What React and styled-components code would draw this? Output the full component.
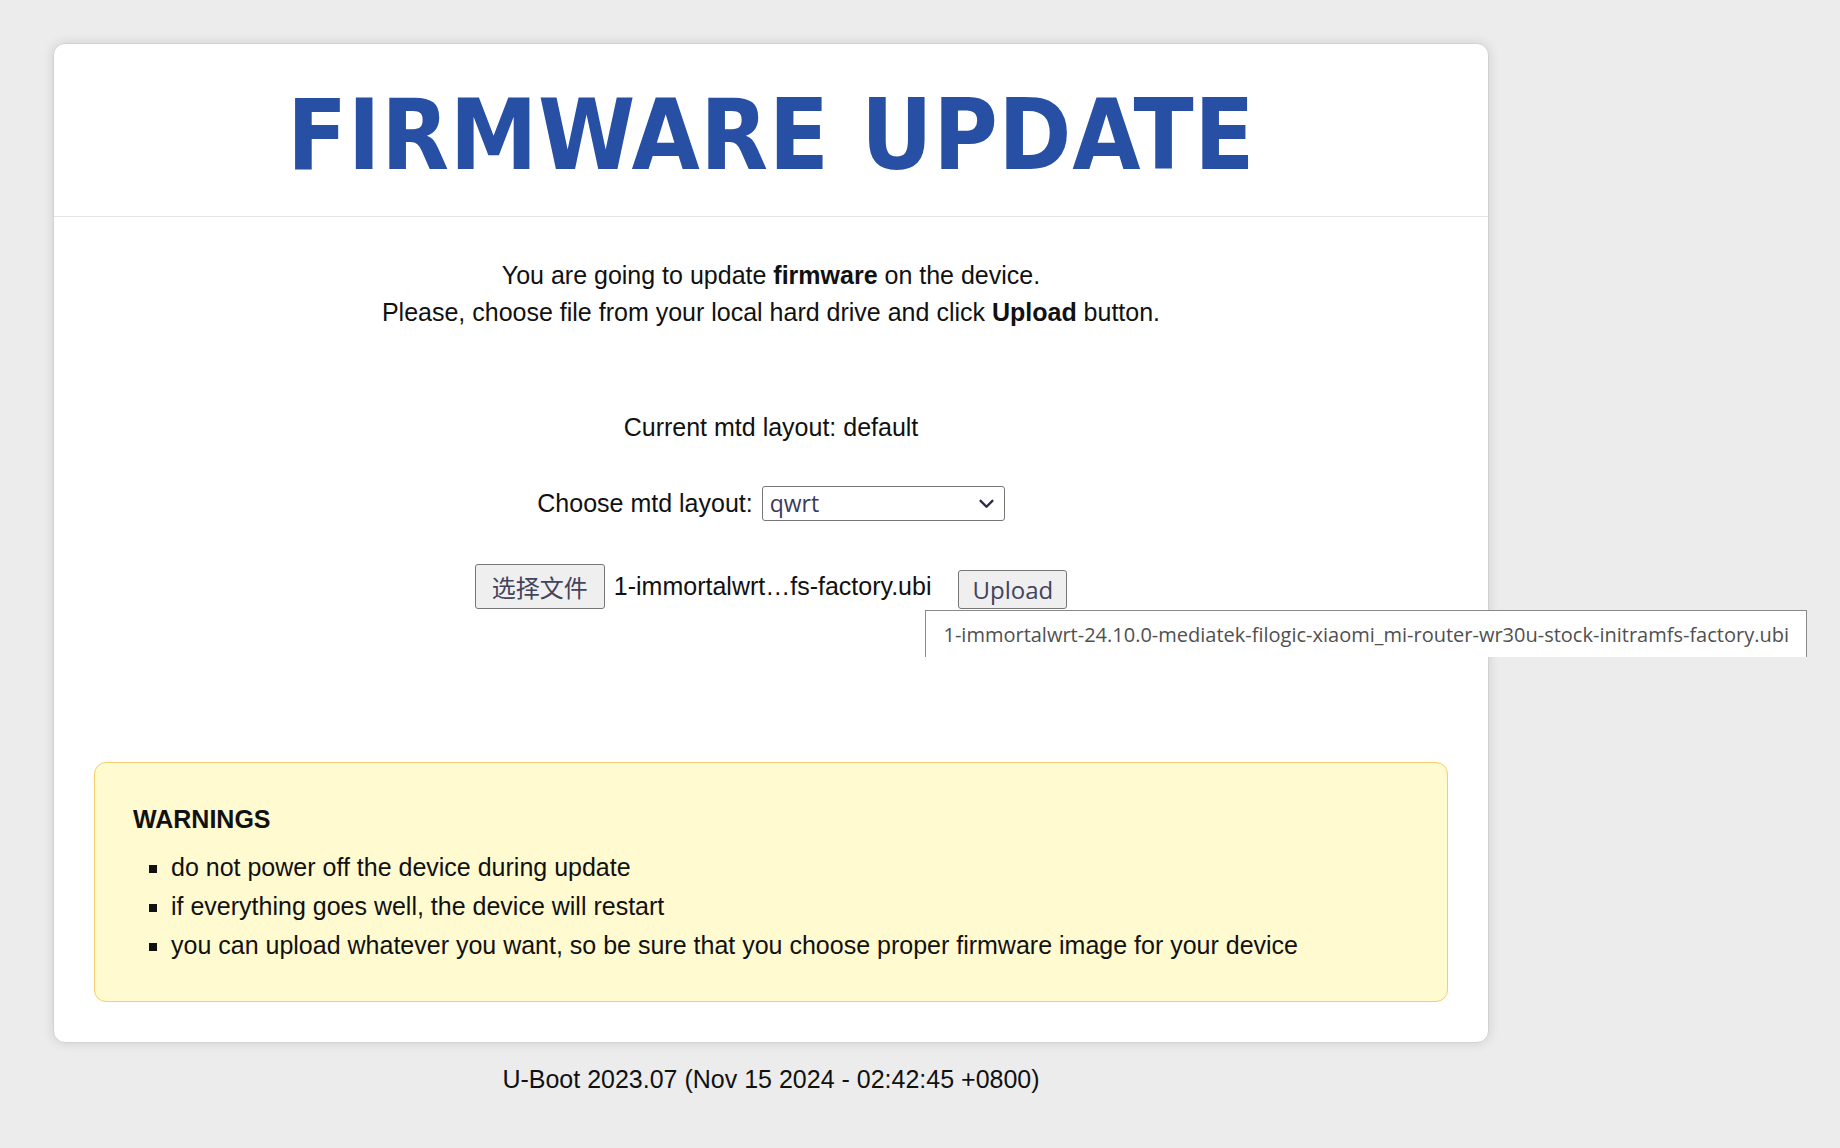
import React from "react";
import styled, { createGlobalStyle } from "styled-components";

const GlobalStyle = createGlobalStyle`
    html, body {
        margin: 0;
        padding: 0;
        background-color: #ececec;
        font-family: "Liberation Sans", Arial, sans-serif;
        color: #111;
    }
`;

const App = () => {
    return (
        <>
            <GlobalStyle />
            <Page>
                <Card>
                    <Header>
                        <Title>FIRMWARE UPDATE</Title>
                    </Header>
                    <Body>
                        <Intro>
                            <Line>You are going to update <b>firmware</b> on the device.</Line>
                            <Line>Please, choose file from your local hard drive and click <b>Upload</b> button.</Line>
                        </Intro>
                        <Current>Current mtd layout: default</Current>
                        <ChooseRow>
                            <span>Choose mtd layout:</span>
                            <SelectBox>
                                <Select defaultValue="qwrt">
                                    <option value="qwrt">qwrt</option>
                                    <option value="default">default</option>
                                </Select>
                                <Chevron viewBox="0 0 16 16">
                                    <path d="M3.5 6 L8 10.5 L12.5 6" fill="none" stroke="#2b2b4a" strokeWidth="1.8" strokeLinecap="round" strokeLinejoin="round" />
                                </Chevron>
                            </SelectBox>
                        </ChooseRow>
                        <FileRow>
                            <FormButton $cjk>选择文件</FormButton>
                            <FileName>1-immortalwrt…fs-factory.ubi</FileName>
                            <UploadWrap>
                                <FormButton>Upload</FormButton>
                                <Tooltip>1-immortalwrt-24.10.0-mediatek-filogic-xiaomi_mi-router-wr30u-stock-initramfs-factory.ubi</Tooltip>
                            </UploadWrap>
                        </FileRow>
                        <Warning>
                            <WarningTitle>WARNINGS</WarningTitle>
                            <List>
                                <li>do not power off the device during update</li>
                                <li>if everything goes well, the device will restart</li>
                                <li>you can upload whatever you want, so be sure that you choose proper firmware image for your device</li>
                            </List>
                        </Warning>
                    </Body>
                </Card>
                <Footer>U-Boot 2023.07 (Nov 15 2024 - 02:42:45 +0800)</Footer>
            </Page>
        </>
    );
};

const Page = styled.div`
    display: flex;
    flex-direction: column;
    width: 1436px;
    padding: 43px 0 0 53px;
`;

const Card = styled.div`
    background-color: white;
    border: 1px solid #d2d2d2;
    border-radius: 12px;
    box-shadow: 0 0 12px rgba(0, 0, 0, 0.12);
    padding-bottom: 40px;
`;

const Header = styled.div`
    display: flex;
    align-items: center;
    justify-content: center;
    box-sizing: border-box;
    height: 173px;
    padding-top: 10px;
    border-bottom: 1px solid #e4e4e4;
`;

const Title = styled.h1`
    margin: 0;
    font-family: "DejaVu Sans Condensed", "DejaVu Sans", sans-serif;
    font-stretch: condensed;
    font-weight: bold;
    font-size: 98px;
    letter-spacing: 0.6px;
    line-height: 1;
    color: #2750a5;
`;

const Body = styled.div`
    display: flex;
    flex-direction: column;
    align-items: center;
    font-size: 25px;
`;

const Intro = styled.div`
    display: flex;
    flex-direction: column;
    align-items: center;
    padding-top: 40px;
`;

const Line = styled.div`
    line-height: 37px;

    b {
        font-weight: bold;
    }
`;

const Current = styled.div`
    margin-top: 78px;
    line-height: 37px;
`;

const ChooseRow = styled.div`
    display: flex;
    align-items: center;
    gap: 9px;
    margin-top: 40px;
    height: 34px;
`;

const SelectBox = styled.div`
    position: relative;
    display: flex;
`;

const Select = styled.select`
    appearance: none;
    width: 243px;
    height: 35px;
    padding: 0 30px 0 7px;
    border: 1px solid #767676;
    border-radius: 3px;
    background-color: white;
    font-family: "Open Sans", "Noto Sans", sans-serif;
    font-size: 23px;
    color: #3a3a5e;
    outline: none;
`;

const Chevron = styled.svg`
    position: absolute;
    right: 8px;
    top: 7px;
    width: 21px;
    height: 21px;
    pointer-events: none;
`;

const FileRow = styled.div`
    display: flex;
    align-items: flex-end;
    margin-top: 44px;
`;

const FormButton = styled.button`
    height: ${(p) => (p.$cjk ? "45px" : "39px")};
    padding: ${(p) => (p.$cjk ? "0 16px" : "0 13px")};
    border: 1px solid #767676;
    border-radius: 3px;
    background-color: #efefef;
    font-family: ${(p) => (p.$cjk ? "\"Noto Sans CJK SC\", sans-serif" : "\"Open Sans\", \"Noto Sans\", sans-serif")};
    font-size: 24px;
    color: #43435e;
    line-height: 1;
`;

const FileName = styled.span`
    margin: 0 27px 0 9px;
    line-height: 45px;
`;

const UploadWrap = styled.div`
    position: relative;
    display: flex;
`;

const Tooltip = styled.div`
    position: absolute;
    top: 100%;
    left: -33px;
    margin-top: 1px;
    padding: 0 17px;
    height: 46px;
    display: flex;
    align-items: center;
    white-space: nowrap;
    background-color: white;
    border: 1px solid #8a8a8a;
    border-bottom: none;
    font-family: "Open Sans", "Noto Sans", sans-serif;
    font-size: 20px;
    color: #505050;
    z-index: 2;
`;

const Warning = styled.div`
    align-self: stretch;
    margin: 153px 40px 0;
    padding: 42px 38px 36px;
    background-color: #fffad0;
    border: 1px solid #f6cc6e;
    border-radius: 12px;
`;

const WarningTitle = styled.div`
    font-weight: bold;
    line-height: 28px;
`;

const List = styled.ul`
    margin: 15px 0 0;
    padding-left: 38px;
    list-style-type: square;

    li {
        line-height: 39px;
    }
`;

const Footer = styled.div`
    margin-top: 18px;
    text-align: center;
    font-size: 25px;
    line-height: 37px;
`;

export default App;
